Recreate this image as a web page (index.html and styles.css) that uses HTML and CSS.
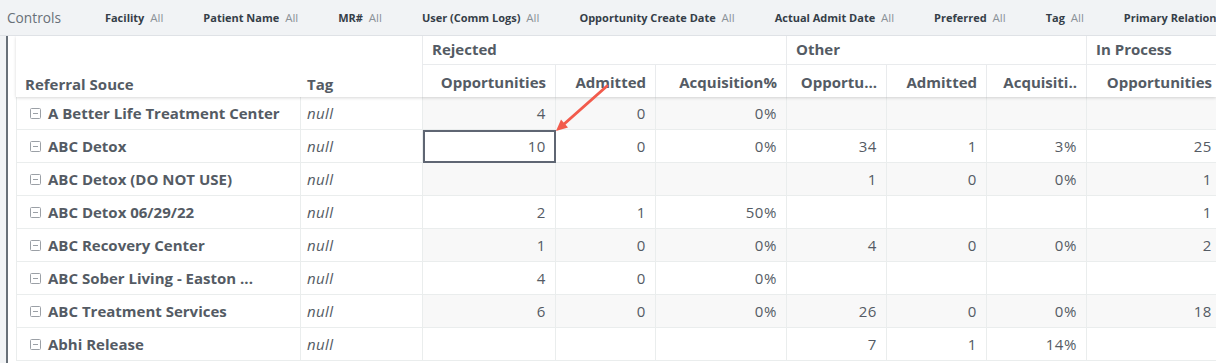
FILE: index.html
```html
<!DOCTYPE html>
<html lang="en">
<head>
<meta charset="utf-8">
<title>Referral Source Pivot</title>
<link rel="stylesheet" href="styles.css">
</head>
<body>
<header class="controls">
  <div class="controls-title">Controls</div>
  <div class="filter">Facility <span>All</span></div>
  <div class="filter">Patient Name <span>All</span></div>
  <div class="filter">MR# <span>All</span></div>
  <div class="filter">User (Comm Logs) <span>All</span></div>
  <div class="filter">Opportunity Create Date <span>All</span></div>
  <div class="filter">Actual Admit Date <span>All</span></div>
  <div class="filter">Preferred <span>All</span></div>
  <div class="filter">Tag <span>All</span></div>
  <div class="filter">Primary Relationship <span>All</span></div>
</header>
<main class="main">
  <div class="gutter"></div>
  <div class="rail"></div>
  <section class="pane">
    <div class="grid head">
      <div class="h-corner">Referral Souce</div>
      <div class="h-tag">Tag</div>
      <div class="h-group span3">Rejected</div>
      <div class="h-group span3">Other</div>
      <div class="h-group">In Process</div>
      <div class="h-sub">Opportunities</div>
      <div class="h-sub">Admitted</div>
      <div class="h-sub">Acquisition%</div>
      <div class="h-sub">Opportu...</div>
      <div class="h-sub">Admitted</div>
      <div class="h-sub">Acquisiti..</div>
      <div class="h-sub">Opportunities</div>
    </div>

    <div class="grid row alt">
      <div class="cell label"><svg class="collapse" width="11" height="11" viewBox="0 0 11 11"><rect x=".5" y=".5" width="10" height="10" rx="1"/><path d="M3 5.5h5"/></svg>A Better Life Treatment Center</div>
      <div class="cell tag">null</div>
      <div class="cell num">4</div><div class="cell num">0</div><div class="cell num">0%</div>
      <div class="cell num"></div><div class="cell num"></div><div class="cell num"></div>
      <div class="cell num"></div>
    </div>
    <div class="grid row">
      <div class="cell label"><svg class="collapse" width="11" height="11" viewBox="0 0 11 11"><rect x=".5" y=".5" width="10" height="10" rx="1"/><path d="M3 5.5h5"/></svg>ABC Detox</div>
      <div class="cell tag">null</div>
      <div class="cell num sel">10</div><div class="cell num">0</div><div class="cell num">0%</div>
      <div class="cell num">34</div><div class="cell num">1</div><div class="cell num">3%</div>
      <div class="cell num">25</div>
    </div>
    <div class="grid row alt">
      <div class="cell label"><svg class="collapse" width="11" height="11" viewBox="0 0 11 11"><rect x=".5" y=".5" width="10" height="10" rx="1"/><path d="M3 5.5h5"/></svg>ABC Detox (DO NOT USE)</div>
      <div class="cell tag">null</div>
      <div class="cell num"></div><div class="cell num"></div><div class="cell num"></div>
      <div class="cell num">1</div><div class="cell num">0</div><div class="cell num">0%</div>
      <div class="cell num">1</div>
    </div>
    <div class="grid row">
      <div class="cell label"><svg class="collapse" width="11" height="11" viewBox="0 0 11 11"><rect x=".5" y=".5" width="10" height="10" rx="1"/><path d="M3 5.5h5"/></svg>ABC Detox 06/29/22</div>
      <div class="cell tag">null</div>
      <div class="cell num">2</div><div class="cell num">1</div><div class="cell num">50%</div>
      <div class="cell num"></div><div class="cell num"></div><div class="cell num"></div>
      <div class="cell num">1</div>
    </div>
    <div class="grid row alt">
      <div class="cell label"><svg class="collapse" width="11" height="11" viewBox="0 0 11 11"><rect x=".5" y=".5" width="10" height="10" rx="1"/><path d="M3 5.5h5"/></svg>ABC Recovery Center</div>
      <div class="cell tag">null</div>
      <div class="cell num">1</div><div class="cell num">0</div><div class="cell num">0%</div>
      <div class="cell num">4</div><div class="cell num">0</div><div class="cell num">0%</div>
      <div class="cell num">2</div>
    </div>
    <div class="grid row">
      <div class="cell label"><svg class="collapse" width="11" height="11" viewBox="0 0 11 11"><rect x=".5" y=".5" width="10" height="10" rx="1"/><path d="M3 5.5h5"/></svg>ABC Sober Living - Easton ...</div>
      <div class="cell tag">null</div>
      <div class="cell num">4</div><div class="cell num">0</div><div class="cell num">0%</div>
      <div class="cell num"></div><div class="cell num"></div><div class="cell num"></div>
      <div class="cell num"></div>
    </div>
    <div class="grid row alt">
      <div class="cell label"><svg class="collapse" width="11" height="11" viewBox="0 0 11 11"><rect x=".5" y=".5" width="10" height="10" rx="1"/><path d="M3 5.5h5"/></svg>ABC Treatment Services</div>
      <div class="cell tag">null</div>
      <div class="cell num">6</div><div class="cell num">0</div><div class="cell num">0%</div>
      <div class="cell num">26</div><div class="cell num">0</div><div class="cell num">0%</div>
      <div class="cell num">18</div>
    </div>
    <div class="grid row">
      <div class="cell label"><svg class="collapse" width="11" height="11" viewBox="0 0 11 11"><rect x=".5" y=".5" width="10" height="10" rx="1"/><path d="M3 5.5h5"/></svg>Abhi Release</div>
      <div class="cell tag">null</div>
      <div class="cell num"></div><div class="cell num"></div><div class="cell num"></div>
      <div class="cell num">7</div><div class="cell num">1</div><div class="cell num">14%</div>
      <div class="cell num"></div>
    </div>
  </section>
</main>
<svg class="arrow" width="1216" height="363" viewBox="0 0 1216 363">
  <line x1="607" y1="86" x2="563" y2="125"/>
  <polygon points="556,131 568,127.5 561,119.5"/>
</svg>
</body>
</html>
```
FILE: styles.css
```css
html, body {
  margin: 0;
  height: 363px;
  overflow: hidden;
  background: #fff;
  font-family: "Open Sans", "Noto Sans", sans-serif;
  color: #545b64;
}
body { position: relative; }

.controls {
  height: 36px;
  box-sizing: border-box;
  border-bottom: 1px solid #dfe2e6;
  background: #f1f3f5;
  display: flex;
  align-items: center;
  gap: 40px;
  padding-left: 7px;
  white-space: nowrap;
  overflow: hidden;
}
.controls-title {
  font-size: 13.7px;
  color: #687078;
  margin-right: 4px;
}
.filter {
  font-size: 11px;
  font-weight: 700;
  color: #353e48;
  flex: none;
}
.filter span {
  font-size: 11.5px;
  font-weight: 400;
  color: #8b9298;
  margin-left: 3px;
}

.main {
  display: flex;
  height: 327px;
}
.gutter { width: 6px; background: #f1f3f5; flex: none; }
.rail { width: 2px; background: #687078; flex: none; }
.pane {
  flex: 1;
  min-width: 0;
  padding-left: 8px;
  overflow: hidden;
}

.grid {
  display: grid;
  grid-template-columns: 284px 122px 133px 100px 131px 100px 100px 100px 135px;
}

.head {
  grid-template-rows: 29px 32px;
  position: relative;
  z-index: 1;
  box-shadow: 0 1px 3px rgba(0, 0, 0, 0.16);
  font-size: 15px;
  font-weight: 700;
  white-space: nowrap;
}
.h-corner {
  grid-row: 1 / 3;
  align-self: end;
  padding: 0 0 3px 9px;
  line-height: 20px;
}
.h-tag {
  grid-row: 1 / 3;
  align-self: end;
  padding: 0 0 3px 7px;
  line-height: 20px;
}
.h-group {
  border-left: 1px solid #e9ebed;
  border-bottom: 1px solid #e9ebed;
  padding: 3px 9px 0;
  line-height: 20px;
  overflow: hidden;
}
.span3 { grid-column: span 3; }
.h-sub {
  border-left: 1px solid #e9ebed;
  text-align: right;
  padding: 2px 9px 0 0;
  line-height: 30px;
  overflow: hidden;
}

.cell {
  height: 33px;
  box-sizing: border-box;
  border-left: 1px solid #eaeded;
  border-bottom: 1px solid #eaeded;
  line-height: 32px;
  font-size: 15px;
  white-space: nowrap;
}
.label {
  display: flex;
  align-items: center;
  gap: 7px;
  padding-left: 13px;
  font-weight: 700;
  overflow: hidden;
}
.collapse { flex: none; }
.collapse rect { fill: none; stroke: #9ba0a6; }
.collapse path { stroke: #9ba0a6; }
.tag {
  font-style: italic;
  padding-left: 6px;
  letter-spacing: 0.4px;
}
.num {
  text-align: right;
  padding-right: 9px;
  letter-spacing: 0.6px;
}
.alt .num { background: #f8f8f8; }
.sel { position: relative; }
.sel::after {
  content: "";
  position: absolute;
  left: 0;
  top: 0;
  right: -1px;
  bottom: -1px;
  border: 2px solid #5f6673;
}

.arrow {
  position: absolute;
  left: 0;
  top: 0;
  pointer-events: none;
  z-index: 5;
}
.arrow line { stroke: #f25b4c; stroke-width: 3; stroke-linecap: round; }
.arrow polygon { fill: #f25b4c; }
```
